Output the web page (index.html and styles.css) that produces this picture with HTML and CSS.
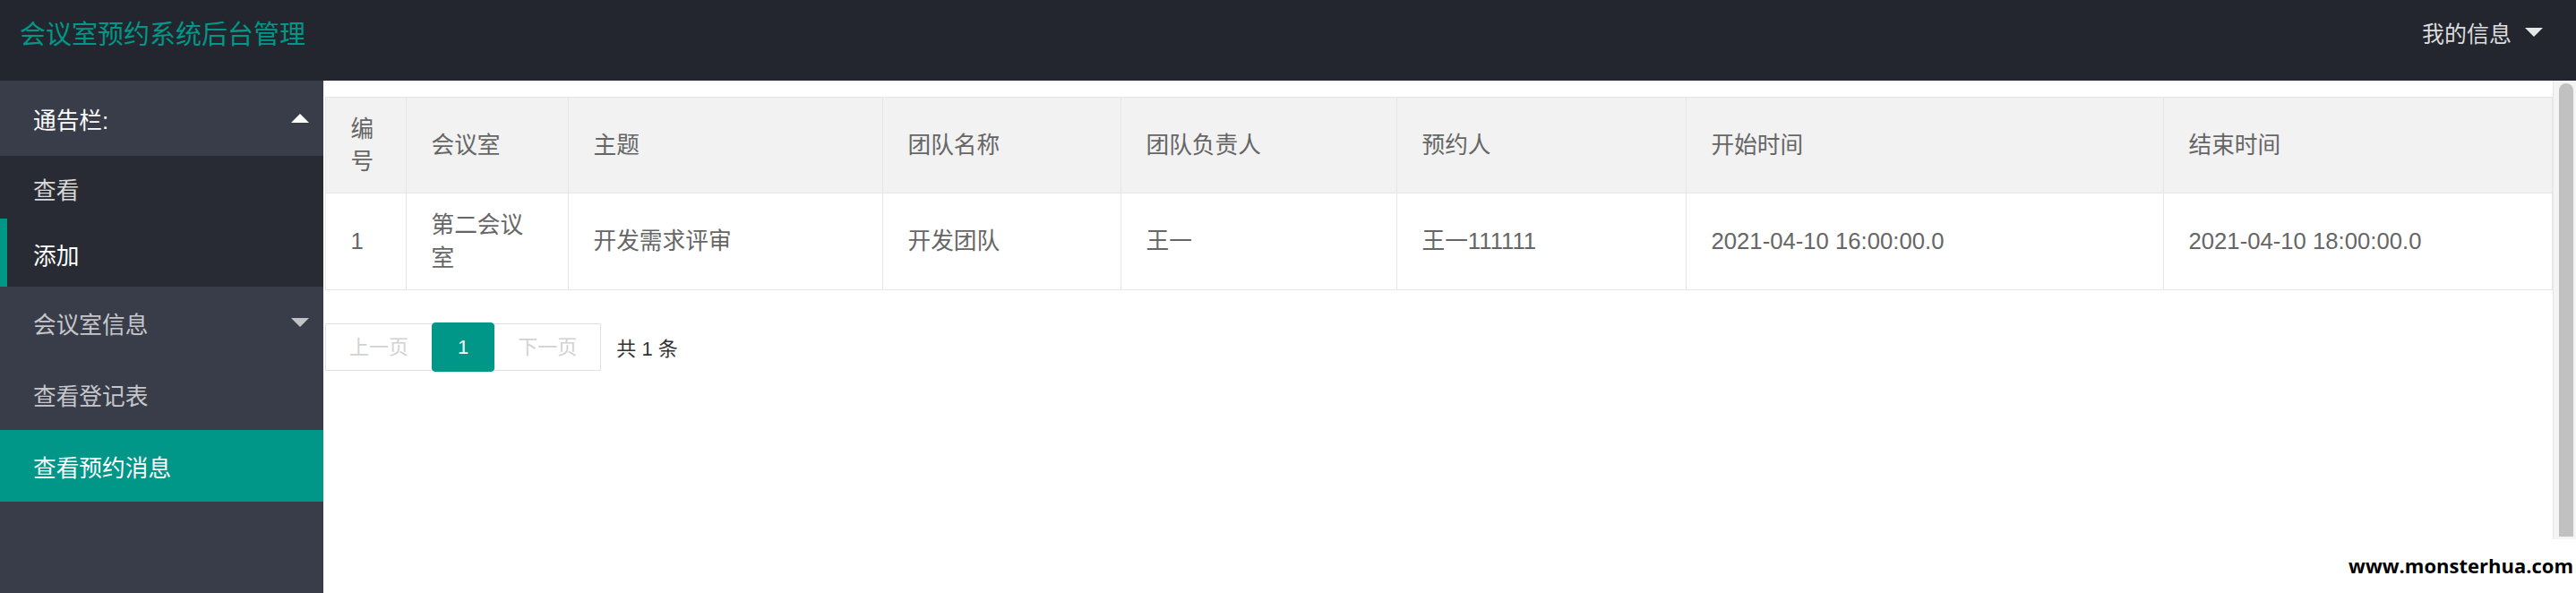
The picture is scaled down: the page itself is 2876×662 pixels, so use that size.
FILE: index.html
```html
<!DOCTYPE html>
<html lang="zh-CN">
<head>
  <meta charset="UTF-8" />
  <title>会议室预约系统后台管理</title>
  <meta name="viewport" content="width=device-width, initial-scale=1.0" />
  <link rel="stylesheet" href="styles.css">
</head>
<body>
  <div class="header">
    <div class="logo">会议室预约系统后台管理</div>
    <div class="user">我的信息 <span class="caret down"></span></div>
  </div>
  <div class="layout">
    <div class="side">
      <div class="nav-item itemed">
        <a class="nav-title">通告栏: <span class="caret up"></span></a>
        <div class="nav-child">
          <a class="child">查看</a>
          <a class="child hover">添加</a>
        </div>
      </div>
      <div class="nav-item">
        <a class="nav-title">会议室信息 <span class="caret down dim"></span></a>
      </div>
      <div class="nav-item">
        <a class="nav-title">查看登记表</a>
      </div>
      <div class="nav-item this">
        <a class="nav-title">查看预约消息</a>
      </div>
      <span class="nav-bar"></span>
    </div>
    <div class="body">
      <div class="content">
        <table class="table">
          <colgroup>
            <col style="width:90px">
            <col style="width:181px">
            <col style="width:351px">
            <col style="width:266px">
            <col style="width:308px">
            <col style="width:323px">
            <col style="width:533px">
            <col>
          </colgroup>
          <thead>
            <tr>
              <th>编号</th>
              <th>会议室</th>
              <th>主题</th>
              <th>团队名称</th>
              <th>团队负责人</th>
              <th>预约人</th>
              <th>开始时间</th>
              <th>结束时间</th>
            </tr>
          </thead>
          <tbody>
            <tr>
              <td>1</td>
              <td>第二会议室</td>
              <td>开发需求评审</td>
              <td>开发团队</td>
              <td>王一</td>
              <td>王一111111</td>
              <td>2021-04-10 16:00:00.0</td>
              <td>2021-04-10 18:00:00.0</td>
            </tr>
          </tbody>
        </table>
        <div class="laypage">
          <a class="page disabled">上一页</a>
          <span class="page curr">1</span>
          <a class="page disabled">下一页</a>
          <span class="count">共 1 条</span>
        </div>
      </div>
      <div class="scrollbar"><div class="thumb"></div></div>
    </div>
  </div>
  <div class="watermark">www.monsterhua.com</div>
</body>
</html>
```

FILE: styles.css
```css
body {
  margin: 0;
  font-family: "Liberation Sans", "Noto Sans CJK SC", sans-serif;
  background: #fff;
  height: 662px;
  overflow: hidden;
  display: flex;
  flex-direction: column;
}
.header {
  height: 90px;
  background: #23262e;
  display: flex;
  align-items: center;
  justify-content: space-between;
  padding: 0 37px 18px 22px;
  box-sizing: border-box;
}
.logo {
  color: #009688;
  font-size: 29px;
}
.user {
  color: #dcdcdc;
  font-size: 25px;
  display: flex;
  align-items: center;
  gap: 15px;
}
.caret {
  display: inline-block;
  width: 0;
  height: 0;
  border-left: 10px solid transparent;
  border-right: 10px solid transparent;
}
.caret.down {
  border-top: 10px solid #e6e6e6;
}
.caret.up {
  border-bottom: 10px solid #fff;
}
.caret.dim {
  border-top-color: #c2c3c7;
}
.layout {
  flex: 1;
  display: flex;
}
.side {
  position: relative;
  width: 361px;
  background: #393d49;
  flex-shrink: 0;
}
.nav-title, .child {
  display: flex;
  align-items: center;
  justify-content: space-between;
  padding: 0 16px 0 37px;
  font-size: 25.7px;
  color: #c6c7cb;
}
.nav-title {
  height: 80px;
}
.itemed .nav-title {
  height: 84px;
  color: #fff;
}
.nav-child {
  background: #282b33;
}
.child {
  height: 73px;
  color: #d8d8d8;
}
.child.hover {
  color: #fff;
}
.this .nav-title {
  background: #009688;
  color: #fff;
}
.nav-bar {
  position: absolute;
  left: 0;
  top: 154px;
  width: 8px;
  height: 76px;
  background: #009688;
}
.body {
  flex: 1;
  display: flex;
  align-items: flex-start;
}
.content {
  flex: 1;
  padding: 18px 0 0 2px;
}
.table {
  width: 100%;
  table-layout: fixed;
  border-collapse: collapse;
  color: #666;
}
.table th, .table td {
  border: 1px solid #e6e6e6;
  padding: 16.5px 27.5px;
  line-height: 36.7px;
  font-size: 25.7px;
  font-weight: normal;
  text-align: left;
}
.table thead tr {
  background: #f2f2f2;
}
.laypage {
  margin-top: 36px;
  display: flex;
  align-items: center;
}
.page {
  height: 51px;
  line-height: 51px;
  padding: 0 26px;
  border: 1px solid #e2e2e2;
  margin-right: -1px;
  font-size: 22px;
  color: #333;
  background: #fff;
}
.page.disabled {
  color: #d2d2d2;
}
.page.curr {
  position: relative;
  padding: 0 28px;
  background: #009688;
  border-color: #009688;
  color: #fff;
  border-radius: 4px;
  height: 53px;
  line-height: 53px;
}
.count {
  margin-left: 18px;
  font-size: 22px;
  color: #333;
}
.scrollbar {
  width: 26px;
  height: 512px;
  background: #f4f4f4;
  border-left: 1px solid #e8e8e8;
  box-sizing: border-box;
  padding: 3px 3px 0 6px;
}
.thumb {
  height: 506px;
  background: #c1c1c1;
  border-radius: 8px 8px 0 0;
}
.watermark {
  position: absolute;
  right: 3px;
  bottom: 16px;
  font-family: "Open Sans", sans-serif;
  font-weight: 700;
  font-size: 22px;
  color: #000;
}
```
